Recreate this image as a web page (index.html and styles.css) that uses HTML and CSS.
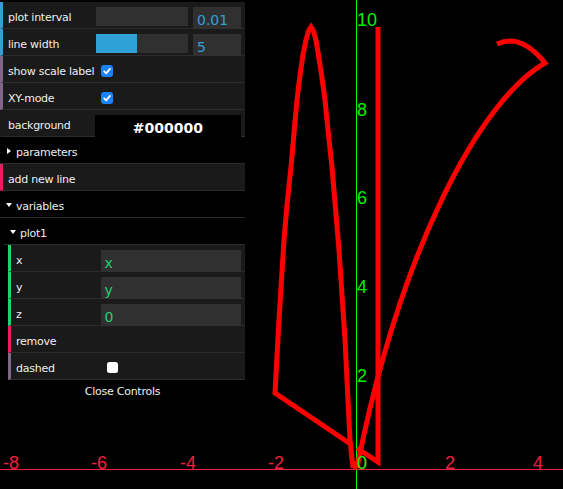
FILE: index.html
```html
<!DOCTYPE html>
<html>
<head>
<meta charset="utf-8">
<link rel="stylesheet" href="styles.css">
</head>
<body>
<svg class="plot" width="563" height="489" viewBox="0 0 563 489">
  <line class="axis-y" x1="356.5" y1="0" x2="356.5" y2="489"/>
  <line class="axis-x" x1="0" y1="469.5" x2="563" y2="469.5"/>
  <g class="xlabels">
    <text x="3" y="469">-8</text>
    <text x="91" y="469">-6</text>
    <text x="180" y="469">-4</text>
    <text x="268" y="469">-2</text>
    <text x="357" y="469">0</text>
    <text x="445" y="469">2</text>
    <text x="533" y="469">4</text>
  </g>
  <g class="curve">
    <path d="M497,44 Q521,33 545,63 C480,100 400,250 357,468"/>
    <polyline points="352,445 275,393 279,320 284,240 287,205 291,167 294,133 297,100 300,75 303,55 306,40 308.5,31 311,27 313.5,31 316,40 318,52 320,65 322,78 325,100 328,130 332,167 339,250 345,340 350,440 353,468"/>
    <polyline points="357,448 378,462 378,27"/>
    <circle cx="355" cy="465" r="4"/>
  </g>
  <g class="ylabels">
    <text x="357" y="26">10</text>
    <text x="357" y="116">8</text>
    <text x="357" y="204">6</text>
    <text x="357" y="293">4</text>
    <text x="357" y="382">2</text>
    <text x="357" y="469">0</text>
  </g>
</svg>

<div class="dg">
  <div class="row num">
    <span class="name">plot interval</span>
    <div class="c">
      <div class="slider"><div class="fill" style="width:0%"></div></div>
      <div class="field numbox">0.01</div>
    </div>
  </div>
  <div class="row num">
    <span class="name">line width</span>
    <div class="c">
      <div class="slider"><div class="fill" style="width:45%"></div></div>
      <div class="field numbox">5</div>
    </div>
  </div>
  <div class="row bool">
    <span class="name">show scale label</span>
    <div class="c">
      <span class="check on"><svg width="12" height="12" viewBox="0 0 12 12"><path d="M3.2 6.4 L5.2 8.4 L8.9 3.9" fill="none" stroke="#fff" stroke-width="1.8" stroke-linecap="round" stroke-linejoin="round"/></svg></span>
    </div>
  </div>
  <div class="row bool">
    <span class="name">XY-mode</span>
    <div class="c">
      <span class="check on"><svg width="12" height="12" viewBox="0 0 12 12"><path d="M3.2 6.4 L5.2 8.4 L8.9 3.9" fill="none" stroke="#fff" stroke-width="1.8" stroke-linecap="round" stroke-linejoin="round"/></svg></span>
    </div>
  </div>
  <div class="row colorrow">
    <span class="name">background</span>
    <div class="c">
      <div class="field colorbox">#000000</div>
    </div>
  </div>
  <div class="title closed">parameters</div>
  <div class="row func">
    <span class="name">add new line</span>
  </div>
  <div class="folder">
    <div class="title open">variables</div>
    <div class="folder-body">
      <div class="folder">
        <div class="title open">plot1</div>
        <div class="folder-body">
          <div class="row str">
            <span class="name">x</span>
            <div class="c"><div class="field strbox">x</div></div>
          </div>
          <div class="row str">
            <span class="name">y</span>
            <div class="c"><div class="field strbox">y</div></div>
          </div>
          <div class="row str">
            <span class="name">z</span>
            <div class="c"><div class="field strbox">0</div></div>
          </div>
          <div class="row func">
            <span class="name">remove</span>
          </div>
          <div class="row bool">
            <span class="name">dashed</span>
            <div class="c"><span class="check off"></span></div>
          </div>
        </div>
      </div>
    </div>
  </div>
  <div class="close">Close Controls</div>
</div>
</body>
</html>
```
FILE: styles.css
```css
html, body {
  margin: 0;
  padding: 0;
  background: #000;
  width: 563px;
  height: 489px;
  overflow: hidden;
}

.plot {
  position: absolute;
  left: 0;
  top: 0;
  z-index: 0;
}

.axis-y {
  stroke: #00ff00;
  stroke-width: 1;
}

.axis-x {
  stroke: #f0203f;
  stroke-width: 1;
}

.xlabels text {
  font-family: "Liberation Sans", Arial, sans-serif;
  font-size: 18px;
  fill: #f0203f;
}

.ylabels text {
  font-family: "Liberation Sans", Arial, sans-serif;
  font-size: 18px;
  fill: #00f000;
}

.curve polyline,
.curve path {
  fill: none;
  stroke: #ff0000;
  stroke-width: 5;
  stroke-linejoin: miter;
  stroke-miterlimit: 10;
}

.curve circle {
  fill: #ff0000;
}

.dg {
  position: relative;
  z-index: 1;
  width: 245px;
  margin-top: 2px;
  font-family: "DejaVu Sans", sans-serif;
  font-size: 11px;
  letter-spacing: -0.25px;
  color: #eee;
}

.row {
  display: flex;
  height: 26px;
  border-bottom: 1px solid #2c2c2c;
  border-left: 3px solid #1a1a1a;
  background: #1a1a1a;
  padding: 0 4px 0 5px;
}

.num { border-left-color: #2fa1d6; }
.bool { border-left-color: #806787; }
.func { border-left-color: #e61d5f; }
.str { border-left-color: #1ed36f; }
.colorrow { border-left-color: #1a1a1a; }

.name {
  flex: 1;
  min-width: 0;
  padding-top: 3px;
  line-height: 26px;
  height: 23px;
  white-space: nowrap;
  overflow: hidden;
}

.c {
  width: 62.4%;
  display: flex;
  align-items: flex-start;
}

.slider {
  flex: 1;
  height: 19px;
  margin-top: 5px;
  background: #303030;
}

.fill {
  height: 100%;
  background: #2fa1d6;
}

.field {
  margin-top: 5px;
  height: 22px;
  box-sizing: border-box;
  padding: 5px 0 0 4px;
  line-height: 16px;
  background: #303030;
  font-size: 14px;
  letter-spacing: 0;
  white-space: nowrap;
  overflow: hidden;
}

.numbox {
  width: 48px;
  margin-left: 5px;
  color: #2fa1d6;
}

.strbox {
  flex: 1;
  color: #1ed36f;
}

.colorbox {
  flex: 1;
  margin-left: -1px;
  padding-left: 0;
  background: #000;
  color: #fff;
  font-weight: bold;
  text-align: center;
}

.check {
  display: block;
  margin-top: 9px;
}

.check.on {
  width: 12px;
  height: 12px;
  margin-left: 5px;
  border-radius: 3px;
  background: #1b82fa;
}

.check.on svg {
  display: block;
}

.check.off {
  width: 11px;
  height: 11px;
  margin-left: 6px;
  border-radius: 2.5px;
  background: #fff;
}

.title {
  display: flex;
  align-items: center;
  box-sizing: border-box;
  height: 27px;
  padding-top: 5px;
  border-bottom: 1px solid #2c2c2c;
  background: #000;
  line-height: 13px;
}

.title::before {
  content: "";
  display: block;
  width: 0;
  height: 0;
  margin-top: -3px;
}

.title.closed {
  padding-left: 7px;
}

.title.closed::before {
  border-left: 4px solid #fff;
  border-top: 3.5px solid transparent;
  border-bottom: 3.5px solid transparent;
  margin-right: 5px;
}

.title.open {
  padding-left: 6px;
}

.title.open::before {
  border-top: 4px solid #fff;
  border-left: 3px solid transparent;
  border-right: 3px solid transparent;
  margin-right: 4px;
}

.folder-body {
  padding-left: 4px;
}

.close {
  box-sizing: border-box;
  height: 20px;
  padding-top: 3px;
  line-height: 17px;
  text-align: center;
  background: #000;
}
```
